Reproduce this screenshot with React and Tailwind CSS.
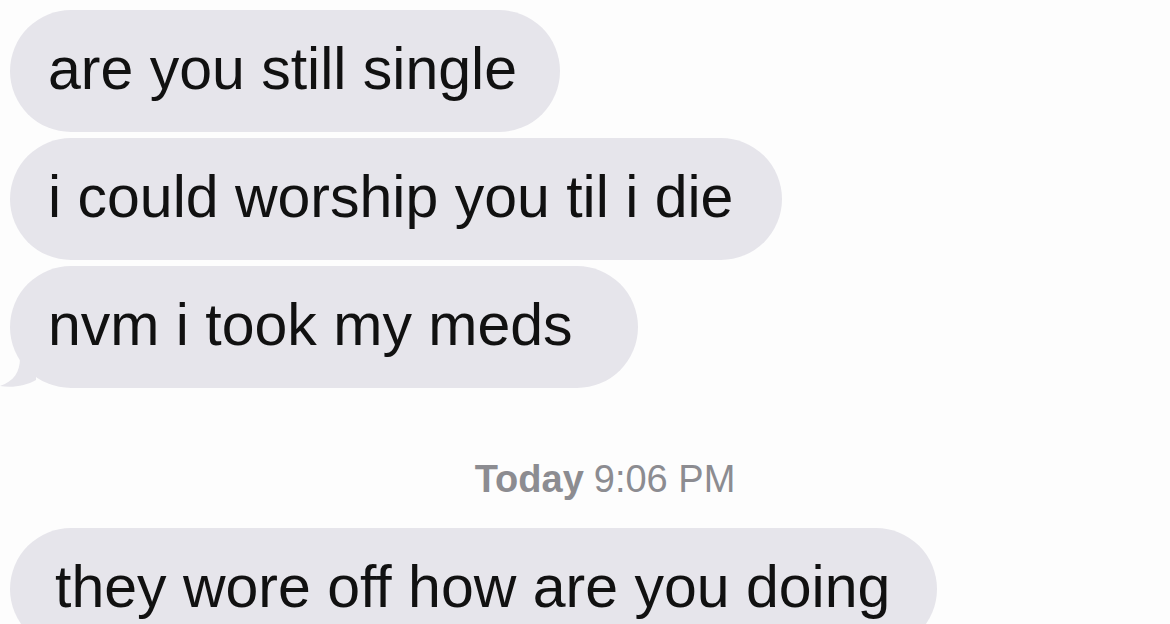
import React from 'react';

const font = { fontFamily: '"Liberation Sans", Arial, sans-serif' };

function Bubble({ text, className, tail }) {
  return (
    <div className={`relative h-[122px] rounded-full bg-[#e6e5eb] flex items-center shrink-0 ${className}`}>
      <span className="text-[59px] leading-none text-[#111111] whitespace-nowrap -mt-[3px]">{text}</span>
      {tail && (
        <svg className="absolute -left-[10px] bottom-0" width="40" height="40" viewBox="0 0 40 40">
          <path d="M20 0 L20 10 C20 24 14 33 0 38 C12 40 26 38 36 32 L36 0 Z" fill="#e6e5eb" />
        </svg>
      )}
    </div>
  );
}

export default function App() {
  return (
    <div className="w-[1170px] h-[624px] overflow-hidden bg-[#fdfdfd]" style={font}>
      <div className="flex flex-col items-start gap-[6px] pt-[10px] pl-[10px]">
        <Bubble text="are you still single" className="w-[550px] pl-[38px]" />
        <Bubble text="i could worship you til i die" className="w-[772px] pl-[38px]" />
        <Bubble text="nvm i took my meds" className="w-[628px] pl-[38px]" tail />
      </div>

      <div className="flex justify-center pl-[40px] mt-[72px] text-[38px] leading-none text-[#8c8c91]">
        <span className="font-bold">Today</span>
        <span className="ml-[10px]">9:06 PM</span>
      </div>

      <div className="flex pl-[10px] mt-[30px]">
        <Bubble text="they wore off how are you doing" className="w-[927px] pl-[45px]" />
      </div>
    </div>
  );
}
